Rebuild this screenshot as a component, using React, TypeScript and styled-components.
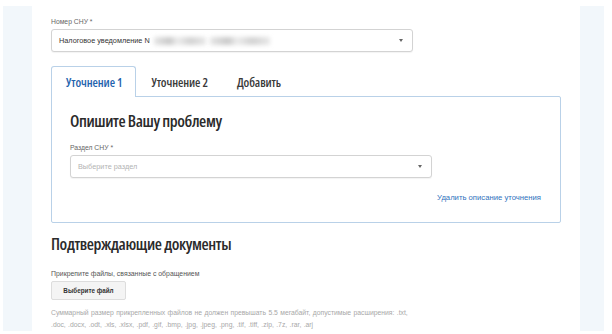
import React from "react";
import styled, { createGlobalStyle } from "styled-components";

const Global = createGlobalStyle`
  html, body { margin: 0; padding: 0; background: #fff; }
  body { font-family: "Liberation Sans", Arial, sans-serif; }
`;

const Page = styled.div`
  width: 612px;
  height: 334px;
  overflow: hidden;
  background: #fff;
`;

const Frame = styled.div`
  margin: 6px 8px 0 3px;
  height: 325px;
  background: #f2f7fb;
  padding: 0 24px 0 29px;
  display: flex;
`;

const Main = styled.main`
  flex: 1;
  background: #fff;
  margin-top: -6px;
  padding: 17px 19px 0 19px;
  display: flex;
  flex-direction: column;
`;

const Label = styled.div`
  font-size: 6.8px;
  line-height: 9px;
  color: #666;
  margin-bottom: 3px;
`;

const Select = styled.div<{ $placeholder?: boolean }>`
  box-sizing: border-box;
  width: 362px;
  height: 23px;
  border: 1px solid #d3d3d3;
  border-radius: 3px;
  box-shadow: 0 1px 1px rgba(0, 0, 0, 0.05);
  display: flex;
  align-items: center;
  padding: 0 9px 0 7px;
  font-size: 7.3px;
  color: ${(p) => (p.$placeholder ? "#b3b3b3" : "#333")};
  background: #fff;
`;

const SelectText = styled.span`
  flex: 1;
  display: flex;
  align-items: center;
  white-space: nowrap;
`;

const Blur = styled.span<{ $w: number }>`
  display: inline-block;
  width: ${(p) => p.$w}px;
  height: 8px;
  margin-left: 4px;
  background: linear-gradient(90deg, #e6e6e6, #c9c9c9 30%, #ececec 45%, #d2d2d2 70%, #e8e8e8);
  filter: blur(2px);
`;

const Caret = styled.span`
  width: 0;
  height: 0;
  border-left: 2.5px solid transparent;
  border-right: 2.5px solid transparent;
  border-top: 3px solid #666;
`;

const Tabs = styled.div`
  display: flex;
  margin-top: 14px;
  height: 30px;
  position: relative;
  z-index: 1;
`;

const Tab = styled.div<{ $active?: boolean }>`
  box-sizing: border-box;
  height: 31px;
  padding: 0 13px 0 14px;
  display: flex;
  align-items: center;
  font-family: "Open Sans", sans-serif;
  font-stretch: 75%;
  font-weight: 600;
  font-size: 12.3px;
  letter-spacing: -0.1px;
  color: ${(p) => (p.$active ? "#1f63ad" : "#3a3a3a")};
  background: ${(p) => (p.$active ? "#fff" : "transparent")};
  border: 1px solid ${(p) => (p.$active ? "#b9d1e8" : "transparent")};
  border-bottom: none;
  border-radius: 3px 3px 0 0;
`;

const Panel = styled.section`
  box-sizing: border-box;
  width: 510px;
  height: 127px;
  border: 1px solid #b9d1e8;
  border-radius: 0 2px 2px 2px;
  padding: 13px 19px 0 18px;
  display: flex;
  flex-direction: column;
`;

const Heading = styled.h2`
  margin: 0;
  font-family: "Open Sans", sans-serif;
  font-stretch: 75%;
  font-weight: 600;
  font-size: 16.5px;
  letter-spacing: -0.4px;
  line-height: 22px;
  color: #2b2b2b;
`;

const Field = styled.div`
  margin-top: 11px;
`;

const LinkRow = styled.div`
  display: flex;
  justify-content: flex-end;
  margin-top: 15px;
`;

const Link = styled.a`
  font-size: 7.7px;
  color: #2f72bd;
  text-decoration: none;
`;

const Section = styled.div`
  margin-top: 10px;
  display: flex;
  flex-direction: column;
  align-items: flex-start;
`;

const Hint = styled.div`
  font-size: 6.9px;
  line-height: 9px;
  color: #555;
  margin-top: 14px;
`;

const FileButton = styled.button`
  box-sizing: border-box;
  width: 75px;
  height: 19px;
  margin-top: 3px;
  background: #f4f4f4;
  border: 1px solid #ddd;
  border-radius: 2px;
  font-family: "Liberation Sans", Arial, sans-serif;
  font-weight: 700;
  font-size: 6.3px;
  color: #333;
  padding: 0;
`;

const Note = styled.p`
  margin: 7px 0 0;
  font-size: 6.8px;
  line-height: 12px;
  color: #a8a8a8;
  word-spacing: 0.5px;
`;

export default function App() {
  return (
    <Page>
      <Global />
      <Frame>
        <Main>
          <Label>Номер СНУ *</Label>
          <Select>
            <SelectText>
              Налоговое уведомление N
              <Blur $w={52} />
              <Blur $w={60} />
            </SelectText>
            <Caret />
          </Select>

          <Tabs>
            <Tab $active>Уточнение 1</Tab>
            <Tab>Уточнение 2</Tab>
            <Tab>Добавить</Tab>
          </Tabs>
          <Panel>
            <Heading>Опишите Вашу проблему</Heading>
            <Field>
              <Label>Раздел СНУ *</Label>
              <Select $placeholder>
                <SelectText>Выберите раздел</SelectText>
                <Caret />
              </Select>
            </Field>
            <LinkRow>
              <Link href="#">Удалить описание уточнения</Link>
            </LinkRow>
          </Panel>

          <Section>
            <Heading>Подтверждающие документы</Heading>
            <Hint>Прикрепите файлы, связанные с обращением</Hint>
            <FileButton>Выберите файл</FileButton>
            <Note>
              Суммарный размер прикрепленных файлов не должен превышать 5.5 мегабайт, допустимые расширения: .txt,
              <br />
              .doc, .docx, .odt, .xls, .xlsx, .pdf, .gif, .bmp, .jpg, .jpeg, .png, .tif, .tiff, .zip, .7z, .rar, .arj
            </Note>
          </Section>
        </Main>
      </Frame>
    </Page>
  );
}
